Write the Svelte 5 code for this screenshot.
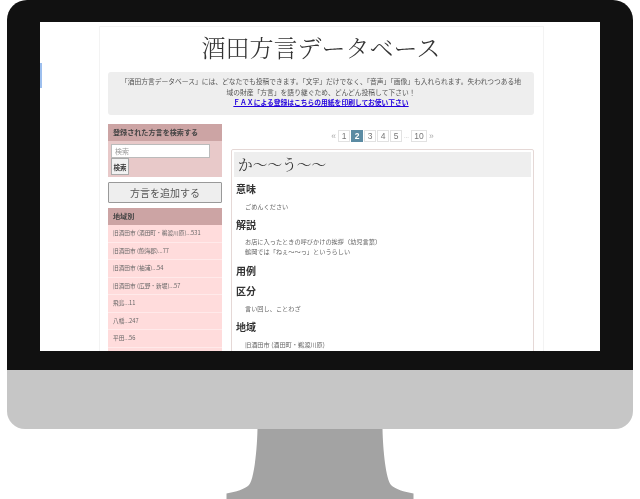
<script>
  const pages = ["1", "2", "3", "4", "5"];
  const regions = [
    "旧酒田市 (酒田町・鵜渡川原)...531",
    "旧酒田市 (飽海郡)...77",
    "旧酒田市 (袖浦)...54",
    "旧酒田市 (広野・新堀)...57",
    "飛島...11",
    "八幡...247",
    "平田...56"
  ];
</script>

<div class="monitor">
  <div class="bezel">
    <div class="screen">
      <div class="page">
        <h1>酒田方言データベース</h1>
        <div class="notice">
          <p>「酒田方言データベース」には、どなたでも投稿できます。「文字」だけでなく、「音声」「画像」も入れられます。失われつつある地域の財産「方言」を語り継ぐため、どんどん投稿して下さい！</p>
          <a href="#fax">ＦＡＸによる登録はこちらの用紙を印刷してお使い下さい</a>
        </div>
        <div class="columns">
          <aside>
            <div class="panel search">
              <h2>登録された方言を検索する</h2>
              <div class="search-body">
                <input type="text" placeholder="検索" />
                <button class="go">検索</button>
              </div>
            </div>
            <button class="add">方言を追加する</button>
            <div class="panel regions">
              <h2>地域別</h2>
              {#each regions as region}
                <div class="region">{region}</div>
              {/each}
            </div>
          </aside>
          <main>
            <nav>
              <span class="arrow">«</span>
              {#each pages as page}
                <span class="num" class:current={page === "2"}>{page}</span>
              {/each}
              <span class="dots">...</span>
              <span class="num ten">10</span>
              <span class="arrow">»</span>
            </nav>
            <article>
              <h3>か〜〜う〜〜</h3>
              <h4>意味</h4>
              <p>ごめんください</p>
              <h4>解説</h4>
              <p>お店に入ったときの呼びかけの挨拶（幼児言葉）<br />鶴岡では「ねぇ〜〜っ」というらしい</p>
              <h4>用例</h4>
              <h4>区分</h4>
              <p>言い回し、ことわざ</p>
              <h4>地域</h4>
              <p>旧酒田市 (酒田町・鵜渡川原)</p>
            </article>
          </main>
        </div>
      </div>
    </div>
  </div>
  <div class="chin"></div>
  <svg class="stand" width="640" height="70" viewBox="0 0 640 70">
    <path d="M257.5 0 H382.5 C383 22 386 50 391 56 C395 60 404 63 413.5 64.5 V70 H226.5 V64.5 C236 63 245 60 249 56 C254 50 257 22 257.5 0 Z" fill="#a3a3a3" />
  </svg>
</div>

<style>
  :global(body) {
    margin: 0;
    background: #fff;
  }
  .monitor {
    width: 640px;
    height: 499px;
    overflow: hidden;
    font-family: "Noto Sans CJK JP", sans-serif;
    color: #444;
  }
  .bezel {
    margin: 0 7px;
    padding: 22px 33px 19px;
    height: 329px;
    background: #111;
    border-radius: 20px 20px 0 0;
  }
  .screen {
    position: relative;
    width: 560px;
    height: 329px;
    background: #fff;
    overflow: hidden;
  }
  /* sliver of blue left over at the screen edge */
  .screen::before {
    content: "";
    position: absolute;
    left: 0;
    top: 41px;
    width: 2px;
    height: 25px;
    background: #9dbfee;
  }
  .page {
    width: 445px;
    height: 330px;
    margin: 4px 0 0 59px;
    padding: 0 9px 0 8px;
    box-sizing: border-box;
    border: 1px solid #f3f3f3;
    border-bottom: 0;
    filter: blur(0.3px);
  }
  h1 {
    margin: 0;
    height: 45px;
    line-height: 39px;
    text-align: center;
    font-family: "Noto Serif CJK JP", "Liberation Serif", serif;
    font-size: 24px;
    font-weight: 300;
    color: #333;
  }
  .notice {
    height: 43px;
    padding: 4px 11px 0;
    box-sizing: border-box;
    background: #eee;
    border-radius: 3px;
    text-align: center;
    font-size: 6.78px;
    line-height: 10.5px;
    color: #555;
  }
  .notice p {
    margin: 0;
  }
  .notice a {
    color: #2200dd;
    font-weight: 700;
    text-decoration: underline;
  }
  .columns {
    display: flex;
    gap: 9px;
    margin-top: 9px;
  }
  aside {
    width: 114px;
    flex: none;
  }
  main {
    flex: 1;
  }
  .panel h2 {
    margin: 0;
    height: 17px;
    padding-left: 5px;
    background: #cca4a4;
    font-size: 7.1px;
    font-weight: 700;
    line-height: 16px;
    color: #444;
  }
  .search-body {
    height: 36px;
    padding: 3px;
    box-sizing: border-box;
    background: #e8c9c9;
  }
  .search-body input {
    display: block;
    width: 99px;
    height: 14px;
    padding: 0 3px;
    box-sizing: border-box;
    border: 1px solid #bbb;
    background: #fff;
    font-family: inherit;
    font-size: 7px;
    line-height: 12px;
    margin: 0;
  }
  .search-body input::placeholder {
    color: #999;
  }
  .go {
    display: block;
    width: 18px;
    height: 17px;
    margin: 0;
    padding: 0;
    border: 1px solid #aaa;
    background: #f2f2f2;
    font-family: inherit;
    font-size: 6.5px;
    font-weight: 700;
    color: #333;
  }
  .add {
    display: block;
    width: 114px;
    height: 21px;
    margin: 5px 0;
    padding: 0;
    border: 1px solid #999;
    border-radius: 1px;
    background: #eee;
    font-family: inherit;
    font-size: 10px;
    color: #555;
  }
  .regions {
    height: 150px;
    background: #ffdcdc;
  }
  .region {
    height: 16.5px;
    padding-left: 5px;
    border-bottom: 1px solid #ffeaea;
    font-size: 5.7px;
    line-height: 16px;
    color: #666;
  }
  nav {
    display: flex;
    justify-content: center;
    align-items: center;
    gap: 1px;
    height: 25px;
    padding-bottom: 1px;
    box-sizing: border-box;
    font-family: "Liberation Sans", sans-serif;
    font-size: 8.5px;
    color: #777;
  }
  .num {
    width: 10px;
    height: 10px;
    line-height: 10px;
    text-align: center;
    border: 1px solid #e2e2e2;
  }
  .num.current {
    background: #5b8ba3;
    border-color: #5b8ba3;
    color: #fff;
    font-weight: 700;
  }
  .num.ten {
    width: 14px;
  }
  .arrow {
    padding: 0 1px;
    color: #aaa;
  }
  .dots {
    width: 7px;
    font-size: 6px;
    text-align: center;
    color: #aaa;
  }
  article {
    height: 240px;
    padding: 2px;
    box-sizing: border-box;
    border: 1px solid #e5d8d6;
    border-radius: 2px;
    font-size: 6.2px;
    color: #666;
  }
  h3 {
    margin: 0 0 5px;
    height: 25px;
    padding-left: 4px;
    background: #eee;
    font-family: "Noto Serif CJK JP", "Liberation Serif", serif;
    font-size: 14.7px;
    font-weight: 400;
    line-height: 24px;
    color: #333;
  }
  h4 {
    margin: 0 0 4.6px 2px;
    height: 15px;
    font-size: 10px;
    font-weight: 700;
    line-height: 14px;
    color: #333;
  }
  h4 + h4 {
    margin-top: 5.5px;
  }
  article p {
    margin: 0 0 6.3px 11px;
    line-height: 10px;
  }
  .chin {
    margin: 0 7px;
    height: 59px;
    background: #c6c6c6;
    border-radius: 0 0 18px 18px;
  }
  .stand {
    display: block;
  }
</style>
